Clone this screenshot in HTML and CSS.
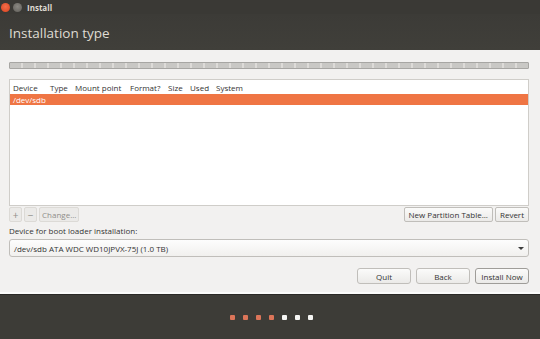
FILE: index.html
```html
<!DOCTYPE html>
<html lang="en">

<head>
    <meta charset="UTF-8">
    <meta name="viewport" content="width=device-width, initial-scale=1.0">
    <title>Install</title>
    <link rel="stylesheet" href="styles.css">
</head>

<body>
    <div class="window">
        <!-- 标题栏 -->
        <div class="titlebar">
            <span class="win_btn win_close"></span>
            <span class="win_btn win_min"></span>
            <span class="win_title">Install</span>
        </div>
        <div class="header">
            <h1>Installation type</h1>
        </div>
        <!-- 内容 -->
        <div class="content">
            <div class="part_bar"></div>
            <div class="part_table">
                <div class="part_head">
                    <span class="col_dev">Device</span>
                    <span class="col_type">Type</span>
                    <span class="col_mount">Mount point</span>
                    <span class="col_fmt">Format?</span>
                    <span class="col_size">Size</span>
                    <span class="col_used">Used</span>
                    <span class="col_sys">System</span>
                </div>
                <div class="part_row selected">/dev/sdb</div>
            </div>
            <div class="tools">
                <div class="tools_left">
                    <button class="btn btn_sq" disabled>+</button>
                    <button class="btn btn_sq" disabled>&minus;</button>
                    <button class="btn btn_small" disabled>Change...</button>
                </div>
                <div class="tools_right">
                    <button class="btn">New Partition Table...</button>
                    <button class="btn">Revert</button>
                </div>
            </div>
            <p class="label">Device for boot loader installation:</p>
            <div class="combo">
                <span>/dev/sdb ATA WDC WD10JPVX-75J (1.0 TB)</span>
                <span class="combo_arrow"></span>
            </div>
            <div class="actions">
                <button class="btn btn_act">Quit</button>
                <button class="btn btn_act">Back</button>
                <button class="btn btn_act btn_default">Install Now</button>
            </div>
        </div>
        <!-- 进度点 -->
        <div class="footer">
            <span class="dot done"></span>
            <span class="dot done"></span>
            <span class="dot done"></span>
            <span class="dot done"></span>
            <span class="dot"></span>
            <span class="dot"></span>
            <span class="dot"></span>
        </div>
    </div>
</body>

</html>
```

FILE: styles.css
```css
* {
    padding: 0;
    margin: 0;
    box-sizing: border-box;
}

body {
    width: 540px;
    height: 339px;
    overflow: hidden;
    font-family: "Open Sans", "DejaVu Sans", sans-serif;
    font-size: 8px;
    color: #333;
    background: #3c3b37;
}

.window {
    display: flex;
    flex-direction: column;
    height: 339px;
}

.titlebar {
    height: 14px;
    background: #3a3935;
    display: flex;
    align-items: center;
    padding-left: 1px;
}

.win_btn {
    width: 9px;
    height: 9px;
    border-radius: 50%;
}

.win_close {
    background: radial-gradient(circle at 50% 40%, #f26d4a, #d9431f);
}

.win_min {
    background: radial-gradient(circle at 50% 40%, #8a8882, #5f5d58);
    margin-left: 3px;
}

.win_title {
    margin-left: 5px;
    font-weight: bold;
    font-size: 8px;
    color: #dfdbd2;
}

.header {
    height: 36px;
    background: linear-gradient(#3c3b37, #403f3a);
    display: flex;
    align-items: center;
    padding-left: 9px;
}

.header>h1 {
    font-weight: normal;
    font-size: 13.5px;
    color: #dfdbd2;
    margin-top: 2px;
}

.content {
    height: 244px;
    background: #f2f1f0;
    padding: 12px 11px 0 9px;
    display: flex;
    flex-direction: column;
    border-bottom: 2px solid #fbfbfa;
}

.part_bar {
    height: 7px;
    border: 1px solid #a7a6a3;
    border-radius: 1px;
    background: repeating-linear-gradient(90deg, #c9c8c5 0 11px, #dedcd9 11px 13px), #cfcecb;
}

.part_table {
    margin-top: 10px;
    height: 127px;
    background: #fff;
    border: 1px solid #cfcdc9;
}

.part_head {
    display: flex;
    height: 14px;
    align-items: center;
}

.part_head>span {
    display: block;
}

.col_dev {
    margin-left: 3px;
    width: 37px;
}

.col_type {
    width: 25px;
}

.col_mount {
    width: 55px;
}

.col_fmt {
    width: 38px;
}

.col_size {
    width: 22px;
}

.col_used {
    width: 26px;
}

.part_row {
    height: 11px;
    line-height: 11px;
    padding-left: 3px;
}

.part_row.selected {
    background: #ef7544;
    color: #fff;
}

.tools {
    display: flex;
    justify-content: space-between;
    margin-top: 1px;
}

.tools_left,
.tools_right {
    display: flex;
    gap: 2px;
}

.btn {
    font-family: inherit;
    font-size: 8px;
    color: #333;
    height: 15px;
    padding: 0 4px;
    border: 1px solid #c0beba;
    border-radius: 2px;
    background: linear-gradient(#fbfbfa, #ebeae8);
}

.btn:disabled {
    color: #8f8e8a;
    background: #ebeae8;
    border-color: #dcdad6;
}

.btn_sq {
    width: 13px;
    padding: 0;
    font-size: 10px;
    line-height: 1;
}

.btn_small {
    padding: 0 2px;
}

.label {
    margin-top: 3px;
    height: 12px;
    line-height: 12px;
}

.combo {
    margin-top: 2px;
    height: 18px;
    border: 1px solid #c0beba;
    border-radius: 3px;
    background: linear-gradient(#fdfdfd, #f1f0ee);
    display: flex;
    align-items: center;
    justify-content: space-between;
    padding: 0 4px;
}

.combo_arrow {
    width: 0;
    height: 0;
    border-left: 3px solid transparent;
    border-right: 3px solid transparent;
    border-top: 3px solid #3c3c3c;
}

.actions {
    display: flex;
    justify-content: flex-end;
    gap: 5px;
    margin-top: 11px;
}

.btn_act {
    width: 54px;
    height: 16px;
    border-radius: 3px;
}

.btn_default {
    border-color: #9f9d99;
}

.footer {
    flex: 1;
    background: #3d3c37;
    border-top: 1px solid #2a2926;
    display: flex;
    justify-content: center;
    align-items: center;
    gap: 8px;
    padding-left: 2px;
    padding-top: 1px;
}

.dot {
    width: 5px;
    height: 5px;
    border-radius: 1px;
    background: #f5f5f3;
}

.dot.done {
    background: #dc7559;
}
```
